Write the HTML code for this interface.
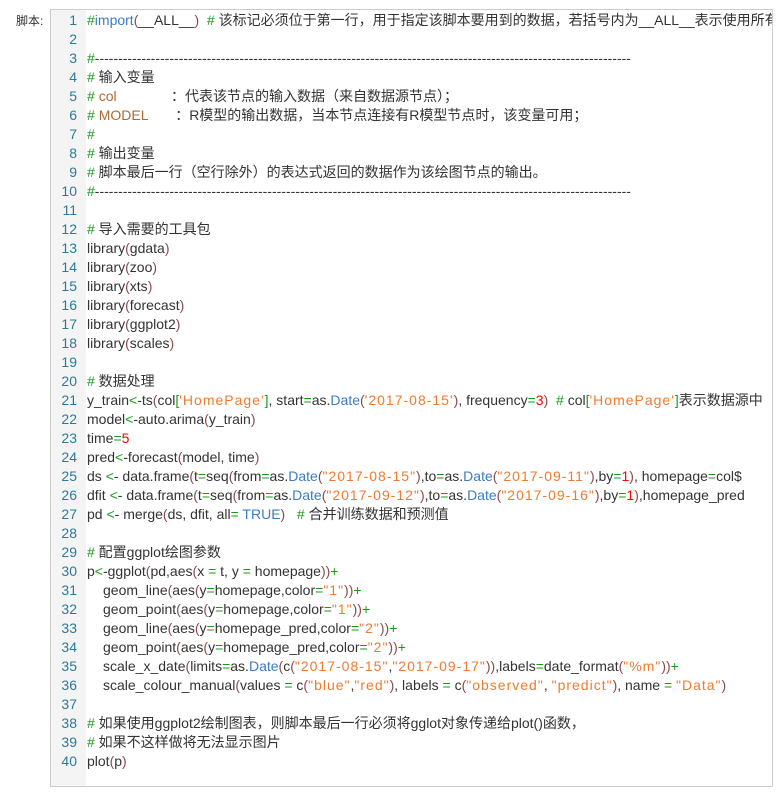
<!DOCTYPE html>
<html><head><meta charset="utf-8"><style>
body{margin:0;width:782px;height:801px;background:#fff;overflow:hidden;font-family:"Liberation Sans","Noto Sans CJK SC",sans-serif;}
.lbl{position:absolute;left:16px;top:12px;font-size:12px;color:#333;}
.box{position:absolute;left:50px;top:9px;width:721px;height:776px;border:1px solid #ccc;background:#fff;overflow:hidden;}
.gut{position:absolute;left:0;top:0;width:35px;height:100%;background:#f4f4f4;}
.code{position:absolute;left:0;top:1px;font-size:14px;line-height:19px;color:#333;}
.code div{white-space:pre;height:19px;}
.ln{display:inline-block;width:26px;text-align:right;color:#2b7a9a;margin-right:10px;}
.c{color:#1a9a1a}.s{color:#f07a30;letter-spacing:1px}.p{color:#8b4b4b}.k{color:#3a7cc4}.n{color:#f00}.o{color:#1a9a1a}.v{color:#b06a30}
.i{padding-left:16px}
</style></head><body>
<div class="lbl">脚本:</div>
<div class="box"><div class="gut"></div><div class="code"><div><span class="ln">1</span><span class="c">#</span><span class="k">import</span><span class="p">(</span>__ALL__<span class="p">)</span>  <span class="c">#</span> 该标记必须位于第一行，用于指定该脚本要用到的数据，若括号内为__ALL__表示使用所有</div><div><span class="ln">2</span></div><div><span class="ln">3</span><span class="c">#</span>-------------------------------------------------------------------------------------------------------------------</div><div><span class="ln">4</span><span class="c">#</span> 输入变量</div><div><span class="ln">5</span><span class="c">#</span> <span class="v">col</span>              ：代表该节点的输入数据（来自数据源节点）；</div><div><span class="ln">6</span><span class="c">#</span> <span class="v">MODEL</span>       ：R模型的输出数据，当本节点连接有R模型节点时，该变量可用；</div><div><span class="ln">7</span><span class="c">#</span></div><div><span class="ln">8</span><span class="c">#</span> 输出变量</div><div><span class="ln">9</span><span class="c">#</span> 脚本最后一行（空行除外）的表达式返回的数据作为该绘图节点的输出。</div><div><span class="ln">10</span><span class="c">#</span>-------------------------------------------------------------------------------------------------------------------</div><div><span class="ln">11</span></div><div><span class="ln">12</span><span class="c">#</span> 导入需要的工具包</div><div><span class="ln">13</span>library<span class="p">(</span>gdata<span class="p">)</span></div><div><span class="ln">14</span>library<span class="p">(</span>zoo<span class="p">)</span></div><div><span class="ln">15</span>library<span class="p">(</span>xts<span class="p">)</span></div><div><span class="ln">16</span>library<span class="p">(</span>forecast<span class="p">)</span></div><div><span class="ln">17</span>library<span class="p">(</span>ggplot2<span class="p">)</span></div><div><span class="ln">18</span>library<span class="p">(</span>scales<span class="p">)</span></div><div><span class="ln">19</span></div><div><span class="ln">20</span><span class="c">#</span> 数据处理</div><div><span class="ln">21</span>y_train<span class="o">&lt;</span>-ts<span class="p">(</span>col<span class="o">[</span><span class="s">'HomePage'</span><span class="o">]</span>, start<span class="o">=</span>as.<span class="k">Date</span><span class="p">(</span><span class="s">'2017-08-15'</span><span class="p">)</span>, frequency<span class="o">=</span><span class="n">3</span><span class="p">)</span>  <span class="c">#</span> col<span class="o">[</span><span class="s">'HomePage'</span><span class="o">]</span>表示数据源中</div><div><span class="ln">22</span>model<span class="o">&lt;</span>-auto.arima<span class="p">(</span>y_train<span class="p">)</span></div><div><span class="ln">23</span>time<span class="o">=</span><span class="n">5</span></div><div><span class="ln">24</span>pred<span class="o">&lt;</span>-forecast<span class="p">(</span>model, time<span class="p">)</span></div><div><span class="ln">25</span>ds <span class="o">&lt;</span>- data.frame<span class="p">(</span>t<span class="o">=</span>seq<span class="p">(</span>from<span class="o">=</span>as.<span class="k">Date</span><span class="p">(</span><span class="s">"2017-08-15"</span><span class="p">)</span>,to<span class="o">=</span>as.<span class="k">Date</span><span class="p">(</span><span class="s">"2017-09-11"</span><span class="p">)</span>,by<span class="o">=</span><span class="n">1</span><span class="p">)</span>, homepage<span class="o">=</span>col$</div><div><span class="ln">26</span>dfit <span class="o">&lt;</span>- data.frame<span class="p">(</span>t<span class="o">=</span>seq<span class="p">(</span>from<span class="o">=</span>as.<span class="k">Date</span><span class="p">(</span><span class="s">"2017-09-12"</span><span class="p">)</span>,to<span class="o">=</span>as.<span class="k">Date</span><span class="p">(</span><span class="s">"2017-09-16"</span><span class="p">)</span>,by<span class="o">=</span><span class="n">1</span><span class="p">)</span>,homepage_pred</div><div><span class="ln">27</span>pd <span class="o">&lt;</span>- merge<span class="p">(</span>ds, dfit, all<span class="o">=</span> <span class="k">TRUE</span><span class="p">)</span>   <span class="c">#</span> 合并训练数据和预测值</div><div><span class="ln">28</span></div><div><span class="ln">29</span><span class="c">#</span> 配置ggplot绘图参数</div><div><span class="ln">30</span>p<span class="o">&lt;</span>-ggplot<span class="p">(</span>pd,aes<span class="p">(</span>x <span class="o">=</span> t, y <span class="o">=</span> homepage<span class="p">))</span><span class="o">+</span></div><div><span class="ln">31</span><span class="i">geom_line<span class="p">(</span>aes<span class="p">(</span>y<span class="o">=</span>homepage,color<span class="o">=</span><span class="s">"1"</span><span class="p">))</span><span class="o">+</span></span></div><div><span class="ln">32</span><span class="i">geom_point<span class="p">(</span>aes<span class="p">(</span>y<span class="o">=</span>homepage,color<span class="o">=</span><span class="s">"1"</span><span class="p">))</span><span class="o">+</span></span></div><div><span class="ln">33</span><span class="i">geom_line<span class="p">(</span>aes<span class="p">(</span>y<span class="o">=</span>homepage_pred,color<span class="o">=</span><span class="s">"2"</span><span class="p">))</span><span class="o">+</span></span></div><div><span class="ln">34</span><span class="i">geom_point<span class="p">(</span>aes<span class="p">(</span>y<span class="o">=</span>homepage_pred,color<span class="o">=</span><span class="s">"2"</span><span class="p">))</span><span class="o">+</span></span></div><div><span class="ln">35</span><span class="i">scale_x_date<span class="p">(</span>limits<span class="o">=</span>as.<span class="k">Date</span><span class="p">(</span>c<span class="p">(</span><span class="s">"2017-08-15"</span>,<span class="s">"2017-09-17"</span><span class="p">))</span>,labels<span class="o">=</span>date_format<span class="p">(</span><span class="s">"%m"</span><span class="p">))</span><span class="o">+</span></span></div><div><span class="ln">36</span><span class="i">scale_colour_manual<span class="p">(</span>values <span class="o">=</span> c<span class="p">(</span><span class="s">"blue"</span>,<span class="s">"red"</span><span class="p">)</span>, labels <span class="o">=</span> c<span class="p">(</span><span class="s">"observed"</span>, <span class="s">"predict"</span><span class="p">)</span>, name <span class="o">=</span> <span class="s">"Data"</span><span class="p">)</span></span></div><div><span class="ln">37</span></div><div><span class="ln">38</span><span class="c">#</span> 如果使用ggplot2绘制图表，则脚本最后一行必须将gglot对象传递给plot()函数，</div><div><span class="ln">39</span><span class="c">#</span> 如果不这样做将无法显示图片</div><div><span class="ln">40</span>plot<span class="p">(</span>p<span class="p">)</span></div></div></div>
</body></html>
